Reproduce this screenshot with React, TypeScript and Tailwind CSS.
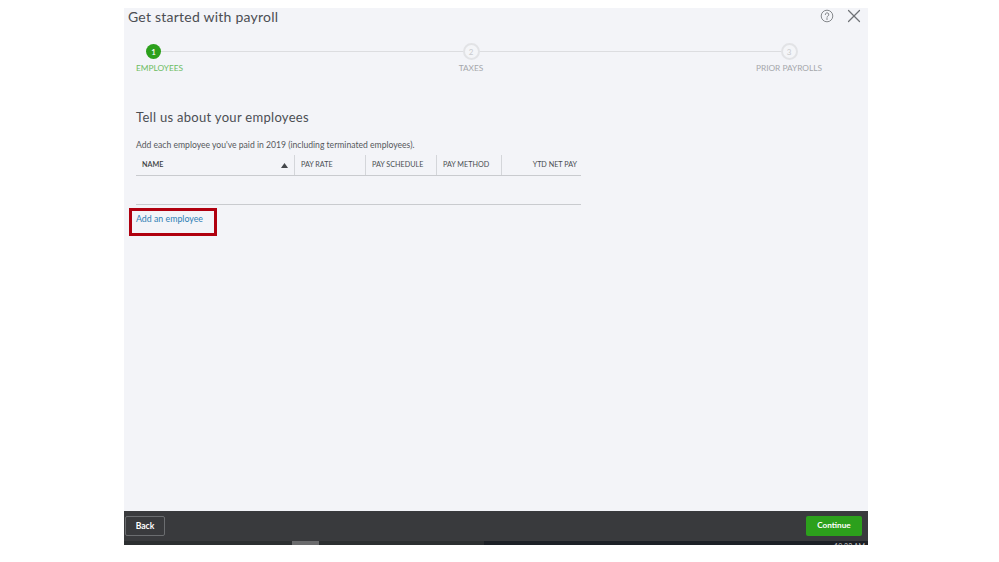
import { X } from "lucide-react";

const font = { fontFamily: 'Lato, "Open Sans", sans-serif' };

function Circle({ n, active }: { n: number; active?: boolean }) {
  return active ? (
    <div className="w-[15px] h-[15px] rounded-full bg-[#2ca01c] text-white text-[8px] font-semibold flex items-center justify-center">{n}</div>
  ) : (
    <div className="w-[17px] h-[17px] rounded-full bg-[#f4f5f8] border-2 border-[#e2e3e6] text-[#c8cacd] text-[8px] flex items-center justify-center">{n}</div>
  );
}

function Th({ children, w, right }: { children: React.ReactNode; w: string; right?: boolean }) {
  return (
    <div className={`${w} h-[20px] pt-[1px] flex items-center text-[7.2px] text-[#4a4d52] border-l border-[#d4d6da] ${right ? "justify-end pr-[3px]" : "pl-[6px]"}`}>
      {children}
    </div>
  );
}

export default function App() {
  return (
    <div className="w-[999px] h-[562px] bg-white overflow-hidden pt-[8px] pl-[124px]" style={font}>
      <div className="w-[744px] h-[537px] flex flex-col bg-[#f3f4f8]">
        <div className="flex-1 flex flex-col">
          <div className="flex justify-between pl-[4px] pr-[3px] h-[19px]">
            <h1 className="text-[14px] leading-[18px] tracking-[0.23px] text-[#4b4e53]">Get started with payroll</h1>
            <div className="flex items-start gap-[9px]">
              <svg width="14" height="14" viewBox="0 0 14 14" fill="none" className="mt-[1px]" stroke="#85888c" strokeWidth="1">
                <circle cx="7" cy="7" r="5.8" />
                <path d="M5.3 5.6a1.75 1.75 0 1 1 2.6 1.5c-.6.35-.9.6-.9 1.2" strokeLinecap="round" />
                <circle cx="7" cy="10" r=".35" fill="#85888c" />
              </svg>
              <X size={22} strokeWidth={1.3} color="#6f7276" className="-mt-[3px]" />
            </div>
          </div>

          <div className="relative ml-[12px] w-[686px] mt-[16px] flex justify-between items-start">
            <div className="absolute left-[17px] right-[33px] top-[8px] h-[1px] bg-[#dcdde0]" />
            <div className="relative w-[47px] flex flex-col">
              <div className="h-[17px] pl-[10px] flex items-center"><Circle n={1} active /></div>
              <span className="mt-[2px] text-[8.3px] leading-[12px] text-[#6cbc62] whitespace-nowrap">EMPLOYEES</span>
            </div>
            <div className="relative w-[26px] ml-[3px] flex flex-col items-center">
              <Circle n={2} />
              <span className="mt-[2px] text-[8.3px] leading-[12px] text-[#a5a7ab] whitespace-nowrap">TAXES</span>
            </div>
            <div className="relative w-[66px] flex flex-col items-center">
              <Circle n={3} />
              <span className="mt-[2px] text-[8.3px] leading-[12px] text-[#a5a7ab] whitespace-nowrap">PRIOR PAYROLLS</span>
            </div>
          </div>

          <div className="pl-[12px] w-[457px] mt-[34px]">
            <h2 className="text-[13px] leading-[18px] tracking-[0.3px] text-[#4b4e53]">Tell us about your employees</h2>
            <p className="mt-[13px] text-[8.6px] leading-[12px] text-[#55585c]">
              Add each employee you've paid in 2019 (including terminated employees).
            </p>
            <div className="mt-[4px] flex border-b border-[#c9cbcf]">
              <div className="w-[158px] h-[20px] pt-[1px] flex items-center justify-between pl-[6px] pr-[6px] text-[7.2px] font-semibold text-[#3c3f43]">
                <span>NAME</span>
                <svg width="7" height="5" viewBox="0 0 7 5"><path d="M3.5 0 7 5H0z" fill="#44474b" /></svg>
              </div>
              <Th w="w-[71px]">PAY RATE</Th>
              <Th w="w-[71px]">PAY SCHEDULE</Th>
              <Th w="w-[65px]">PAY METHOD</Th>
              <Th w="w-[79px]" right>YTD NET PAY</Th>
            </div>
            <div className="h-[29px] border-b border-[#c9cbcf]" />
            <div className="-ml-[7px] mt-[3px] w-[88px] h-[28px] border-[3px] border-[#b0000f] pl-[4px] pt-[1px]">
              <a className="block text-[8.8px] leading-[13px] text-[#2f7fb5]">Add an employee</a>
            </div>
          </div>
        </div>

        <div className="h-[34px] shrink-0 bg-[#393a3d] flex items-start justify-between pl-[1px] pr-[6px] pt-[4px] relative overflow-hidden">
          <button className="w-[40px] h-[20px] mt-[1px] rounded-[2px] border border-[#6b6d70] text-[8.6px] leading-[16px] font-bold text-white">Back</button>
          <button className="w-[56px] h-[20px] mt-[1px] rounded-[2px] bg-[#2ca01c] text-[8.2px] leading-[18px] pb-[2px] font-bold text-white">Continue</button>
          <div className="absolute left-0 right-0 bottom-0 h-[4px] bg-[#2c2f31]" />
          <div className="absolute left-[168px] bottom-0 w-[27px] h-[4px] bg-[#6a6b6d]" />
          <div className="absolute left-[360px] right-0 bottom-0 h-[4px] bg-[#1c2026]" />
          <span className="absolute right-[3px] -bottom-[5px] text-[7px] leading-[8px] text-[#c5c6c8]">10:22 AM</span>
        </div>
      </div>
    </div>
  );
}
